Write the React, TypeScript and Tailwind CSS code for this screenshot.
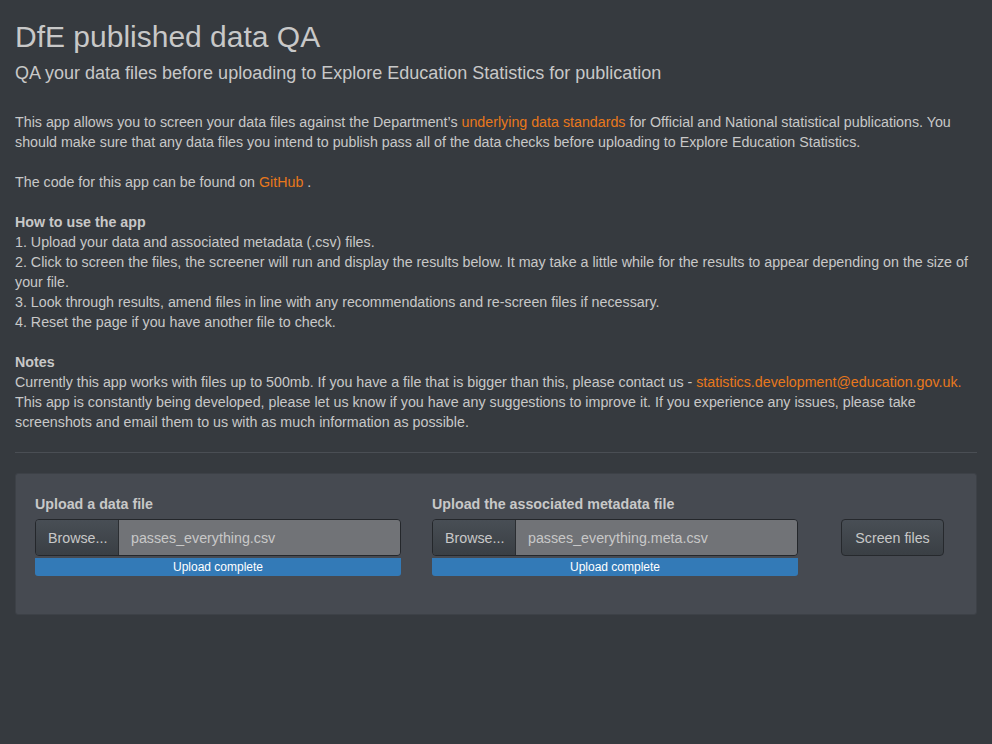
import React from "react";

function FileInput({ label, file }: { label: string; file: string }) {
  return (
    <div className="w-[366px]">
      <label className="block font-bold text-[14.25px] leading-[20px] mb-[5px] text-[#c8c8c8]">{label}</label>
      <div className="flex h-[37px] rounded-[4px] border border-[#24272b] overflow-hidden">
        <span className="flex items-center px-[12px] w-[83px] shrink-0 bg-gradient-to-b from-[#484e55] to-[#3a3f44] border-r border-[#2b2e32] text-[14.25px] text-[#c8c8c8]">
          Browse...
        </span>
        <span className="flex items-center flex-1 px-[12px] bg-[#717377] text-[14.25px] text-[#c8c8c8]">{file}</span>
      </div>
      <div className="mt-[2px] h-[18px] rounded-b-[3px] bg-[#337ab7] text-white text-[12px] leading-[18px] text-center">
        Upload complete
      </div>
    </div>
  );
}

export default function App() {
  return (
    <div className="min-h-[744px] bg-[#363a3f] text-[#c8c8c8] font-['Liberation_Sans',Arial,sans-serif] text-[14.25px] leading-[20px] px-[15px]">
      <h1 className="pt-[20px] text-[30px] leading-[33px] font-normal text-[#c8c8c8]">DfE published data QA</h1>
      <h4 className="mt-[10px] text-[18px] leading-[20px] text-[#c8c8c8]">
        QA your data files before uploading to Explore Education Statistics for publication
      </h4>

      <p className="mt-[29px]">
        This app allows you to screen your data files against the Department’s{" "}
        <a className="text-[#e8781c]">underlying data standards</a> for Official and National statistical publications. You
        should make sure that any data files you intend to publish pass all of the data checks before uploading to Explore
        Education Statistics.
      </p>
      <p className="mt-[20px]">
        The code for this app can be found on <a className="text-[#e8781c]">GitHub</a> .
      </p>
      <div className="mt-[20px]">
        <div className="font-bold">How to use the app</div>
        <div>1. Upload your data and associated metadata (.csv) files.</div>
        <div>
          2. Click to screen the files, the screener will run and display the results below. It may take a little while for
          the results to appear depending on the size of your file.
        </div>
        <div>3. Look through results, amend files in line with any recommendations and re-screen files if necessary.</div>
        <div>4. Reset the page if you have another file to check.</div>
      </div>
      <div className="mt-[20px]">
        <div className="font-bold">Notes</div>
        <div>
          Currently this app works with files up to 500mb. If you have a file that is bigger than this, please contact us -{" "}
          <a className="text-[#e8781c]">statistics.development@education.gov.uk.</a>
        </div>
        <div>
          This app is constantly being developed, please let us know if you have any suggestions to improve it. If you
          experience any issues, please take screenshots and email them to us with as much information as possible.
        </div>
      </div>

      <hr className="mt-[20px] border-t border-[#4a4e54]" />

      <div className="mt-[20px] h-[142px] bg-[#464a51] border border-[#3d4147] rounded-[3px] px-[19px] pt-[20px]">
        <div className="flex items-start">
          <FileInput label="Upload a data file" file="passes_everything.csv" />
          <div className="w-[31px]" />
          <FileInput label="Upload the associated metadata file" file="passes_everything.meta.csv" />
          <button className="ml-[43px] mt-[25px] h-[37px] w-[103px] rounded-[4px] border border-[#26292d] bg-gradient-to-b from-[#484e55] to-[#3a3f44] text-[14.25px] text-[#c8c8c8]">
            Screen files
          </button>
        </div>
      </div>
    </div>
  );
}
